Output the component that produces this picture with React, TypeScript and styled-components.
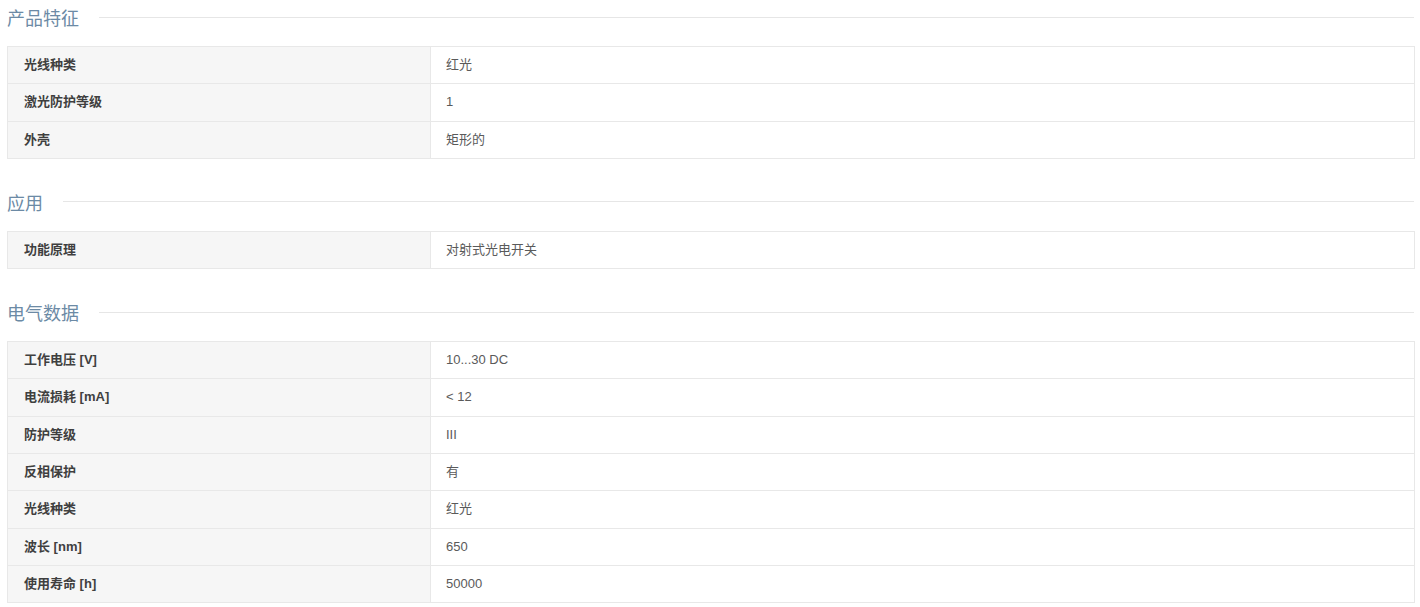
import styled, { createGlobalStyle } from "styled-components";

const GlobalStyle = createGlobalStyle`
  body {
    margin: 0;
    background: #ffffff;
    font-family: "Liberation Sans", "Noto Sans CJK SC", sans-serif;
  }
`;

interface Spec {
  label: string;
  value: string;
}

interface Section {
  title: string;
  rows: Spec[];
}

const sections: Section[] = [
  {
    title: "产品特征",
    rows: [
      { label: "光线种类", value: "红光" },
      { label: "激光防护等级", value: "1" },
      { label: "外壳", value: "矩形的" },
    ],
  },
  {
    title: "应用",
    rows: [{ label: "功能原理", value: "对射式光电开关" }],
  },
  {
    title: "电气数据",
    rows: [
      { label: "工作电压 [V]", value: "10...30 DC" },
      { label: "电流损耗 [mA]", value: "< 12" },
      { label: "防护等级", value: "III" },
      { label: "反相保护", value: "有" },
      { label: "光线种类", value: "红光" },
      { label: "波长 [nm]", value: "650" },
      { label: "使用寿命 [h]", value: "50000" },
    ],
  },
];

const Page = styled.div`
  padding: 0 5px 0 7px;
`;

const Block = styled.section`
  margin-bottom: 26px;
`;

const Heading = styled.div`
  display: flex;
  align-items: center;
  height: 34px;
  gap: 20px;
  margin-bottom: 12px;
`;

const HeadingText = styled.h3`
  margin: 0;
  font-size: 18px;
  font-weight: 400;
  color: #6c8aa5;
  font-family: "Noto Sans CJK SC", sans-serif;
  line-height: 34px;
  white-space: nowrap;
`;

const HeadingLine = styled.div`
  flex: 1;
  height: 1px;
  background: #e6e6e6;
  margin-right: 1px;
`;

const Table = styled.table`
  width: 100%;
  border-collapse: collapse;
  table-layout: fixed;
  font-size: 13px;
`;

const Row = styled.tr``;

const Cell = styled.td<{ $head?: boolean }>`
  box-sizing: border-box;
  border: 1px solid #e8e8e8;
  padding: 9px 16px 9px ${({ $head }) => ($head ? "16px" : "15px")};
  line-height: 18.28px;
  width: ${({ $head }) => ($head ? "423px" : "auto")};
  background: ${({ $head }) => ($head ? "#f6f6f6" : "#ffffff")};
  color: ${({ $head }) => ($head ? "#3f3f3f" : "#5a5a5a")};
  font-weight: ${({ $head }) => ($head ? 700 : 400)};
  white-space: nowrap;
`;

const App = () => {
  return (
    <Page>
      <GlobalStyle />
      {sections.map((s) => (
        <Block key={s.title}>
          <Heading>
            <HeadingText>{s.title}</HeadingText>
            <HeadingLine />
          </Heading>
          <Table>
            <tbody>
              {s.rows.map((r, i) => (
                <Row key={i}>
                  <Cell $head>{r.label}</Cell>
                  <Cell>{r.value}</Cell>
                </Row>
              ))}
            </tbody>
          </Table>
        </Block>
      ))}
    </Page>
  );
};

export default App;
